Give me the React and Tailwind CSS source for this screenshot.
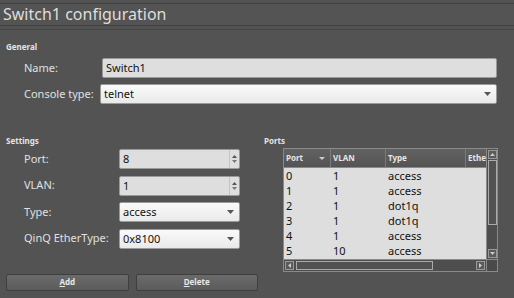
import React from 'react'

const FONT = { fontFamily: '"Noto Sans", "Open Sans", sans-serif' }

const ROWS = [
  ['0', '1', 'access'],
  ['1', '1', 'access'],
  ['2', '1', 'dot1q'],
  ['3', '1', 'dot1q'],
  ['4', '1', 'access'],
  ['5', '10', 'access'],
]

function Arrow({ className = '' }) {
  return (
    <svg width="7" height="4" viewBox="0 0 7 4" className={className}>
      <path d="M0 0 H7 L3.5 4 Z" fill="#555" />
    </svg>
  )
}

function SpinBox({ value }) {
  return (
    <div className="flex h-[20px] w-[121px] rounded-[2px] border border-[#9a9a9a] bg-[#dedede]">
      <div className="flex-1 pl-[3px] text-[11px] leading-[18px] text-[#111]">{value}</div>
      <div className="flex w-[10px] flex-col items-center justify-center gap-[2px] border-l border-[#c4c4c4]">
        <svg width="5" height="3" viewBox="0 0 5 3"><path d="M0 3 H5 L2.5 0 Z" fill="#555" /></svg>
        <svg width="5" height="3" viewBox="0 0 5 3"><path d="M0 0 H5 L2.5 3 Z" fill="#777" /></svg>
      </div>
    </div>
  )
}

function Combo({ value, className = 'w-[121px]' }) {
  return (
    <div className={`flex h-[20px] items-center rounded-[2px] border border-[#9a9a9a] bg-gradient-to-b from-[#fafafa] to-[#e9e9e9] ${className}`}>
      <div className="flex-1 pl-[3px] text-[11px] leading-[18px] text-[#111]">{value}</div>
      <Arrow className="mr-[5px]" />
    </div>
  )
}

function SectionTitle({ children }) {
  return <div className="text-[8px] font-bold leading-[10px] text-[#e4e4e4]">{children}</div>
}

function Button({ letter, rest }) {
  return (
    <div className="flex h-[17px] w-[123px] items-center justify-center rounded-[2px] border border-[#3f3f3f] bg-gradient-to-b from-[#6b6b6b] to-[#5b5b5b] text-[8px] font-bold text-[#e8e8e8]">
      <span className="underline">{letter}</span>{rest}
    </div>
  )
}

function PortsTable() {
  return (
    <div className="flex h-[124px] w-[215px] flex-col border border-[#8a8a8a] bg-[#4d4d4d]">
      <div className="flex flex-1 min-h-0">
        <div className="flex flex-1 flex-col overflow-hidden">
          <div className="flex h-[18px] bg-gradient-to-b from-[#626262] to-[#545454] text-[8px] font-bold leading-[18px] text-[#e6e6e6]">
            <div className="flex w-[47px] items-center justify-between border-r border-[#7a7a7a] pl-[2px] pr-[5px]">
              <span>Port</span>
              <svg width="6" height="3" viewBox="0 0 6 3"><path d="M0 0 H6 L3 3 Z" fill="#ccc" /></svg>
            </div>
            <div className="w-[55px] border-r border-[#7a7a7a] pl-[2px]">VLAN</div>
            <div className="w-[80px] border-r border-[#7a7a7a] pl-[2px]">Type</div>
            <div className="flex-1 pl-[2px]">Ethe</div>
          </div>
          <div className="flex-1 border-t border-[#8a8a8a] bg-[#dedede] text-[11px] leading-[15px] text-[#111]">
            {ROWS.map(r => (
              <div key={r[0]} className="flex h-[15px]">
                <div className="w-[47px] pl-[2px]">{r[0]}</div>
                <div className="w-[55px] pl-[2px]">{r[1]}</div>
                <div className="w-[80px] pl-[2px]">{r[2]}</div>
              </div>
            ))}
          </div>
        </div>
        <div className="flex w-[11px] flex-col items-center border-l border-[#8a8a8a] bg-[#4e4e4e] py-[1px]">
          <div className="flex h-[9px] w-[9px] items-center justify-center border border-[#999] bg-[#5a5a5a]">
            <svg width="5" height="3" viewBox="0 0 5 3"><path d="M0 3 H5 L2.5 0 Z" fill="#ccc" /></svg>
          </div>
          <div className="mt-[1px] h-[65px] w-[9px] border border-[#aaa] bg-[#525252]" />
          <div className="flex-1" />
          <div className="flex h-[9px] w-[9px] items-center justify-center border border-[#999] bg-[#5a5a5a]">
            <svg width="5" height="3" viewBox="0 0 5 3"><path d="M0 0 H5 L2.5 3 Z" fill="#ccc" /></svg>
          </div>
        </div>
      </div>
      <div className="flex h-[12px] border-t border-[#8a8a8a]">
        <div className="flex flex-1 items-center bg-[#4e4e4e] px-[1px]">
          <div className="flex h-[9px] w-[9px] items-center justify-center border border-[#999] bg-[#5a5a5a]">
            <svg width="3" height="5" viewBox="0 0 3 5"><path d="M3 0 V5 L0 2.5 Z" fill="#ccc" /></svg>
          </div>
          <div className="ml-[2px] h-[9px] w-[137px] border border-[#aaa] bg-[#525252]" />
          <div className="flex-1" />
          <div className="flex h-[9px] w-[9px] items-center justify-center border border-[#999] bg-[#5a5a5a]">
            <svg width="3" height="5" viewBox="0 0 3 5"><path d="M0 0 V5 L3 2.5 Z" fill="#ccc" /></svg>
          </div>
        </div>
        <div className="w-[11px] border-l border-[#8a8a8a] bg-[#4a4a4a]" />
      </div>
    </div>
  )
}

export default function App() {
  return (
    <div className="h-[298px] w-[514px] overflow-hidden bg-[#535353]" style={FONT}>
      <div className="pt-[3px]">
        <div className="h-[23px] border-t border-b border-[#404040] bg-[#545454] pl-[3px] text-[16px] leading-[21px] text-[#dedede]">
          Switch1 configuration
        </div>
        <div className="mt-[3px] border-t border-[#444]" />
      </div>

      <div className="pl-[6px] pt-[12px]">
        <SectionTitle>General</SectionTitle>
      </div>
      <div className="mt-[6px] flex flex-col gap-[6px] pl-[24px] pr-[17px] text-[11px] text-[#e0e0e0]">
        <div className="flex items-center">
          <div className="w-[78px]">Name:</div>
          <div className="h-[20px] flex-1 rounded-[2px] border border-[#9a9a9a] bg-[#dedede] pl-[3px] leading-[18px] text-[#111]">Switch1</div>
        </div>
        <div className="flex items-center">
          <div className="w-[76px]">Console type:</div>
          <Combo value="telnet" className="flex-1" />
        </div>
      </div>

      <div className="mt-[32px] flex">
        <div className="flex w-[258px] flex-col pl-[6px]">
          <SectionTitle>Settings</SectionTitle>
          <div className="mt-[3px] flex flex-col gap-[6.5px] pl-[18px] text-[11px] text-[#e0e0e0]">
            <div className="flex items-center">
              <div className="w-[95px]">Port:</div>
              <SpinBox value="8" />
            </div>
            <div className="flex items-center">
              <div className="w-[95px]">VLAN:</div>
              <SpinBox value="1" />
            </div>
            <div className="flex items-center">
              <div className="w-[95px]">Type:</div>
              <Combo value="access" />
            </div>
            <div className="flex items-center">
              <div className="w-[95px]">QinQ EtherType:</div>
              <Combo value="0x8100" />
            </div>
          </div>
          <div className="mt-[25px] flex gap-[7px]">
            <Button letter="A" rest="dd" />
            <Button letter="D" rest="elete" />
          </div>
        </div>
        <div className="flex flex-col pl-[6px]">
          <SectionTitle>Ports</SectionTitle>
          <div className="mt-[2px] pl-[19px]">
            <PortsTable />
          </div>
        </div>
      </div>
    </div>
  )
}
